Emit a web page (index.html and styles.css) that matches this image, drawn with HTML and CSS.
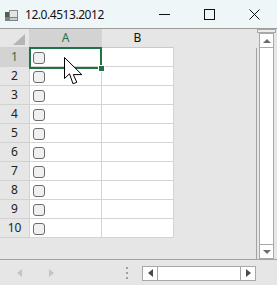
FILE: index.html
```html
<!DOCTYPE html>
<html lang="en">
<head>
    <meta charset="UTF-8">
    <title>12.0.4513.2012</title>
    <link rel="stylesheet" href="styles.css">
</head>
<body>
    <div class="window">
        <div class="titlebar">
            <svg class="app-icon" width="13" height="11" viewBox="0 0 13 11">
                <rect x="0" y="2" width="5" height="5" fill="#4f5d55"/>
                <rect x="4.5" y="0.5" width="8" height="7" fill="#e4e4e4" stroke="#8a8a8a"/>
                <rect x="0" y="7" width="13" height="4" fill="#7c857f"/>
                <rect x="5" y="8" width="7" height="2" fill="#c9cfcb"/>
            </svg>
            <span class="title">12.0.4513.2012</span>
            <div class="caption-btns">
                <span class="cap-btn">
                    <svg width="12" height="12" viewBox="0 0 12 12"><path d="M1 6.5H12" stroke="#111" stroke-width="1"/></svg>
                </span>
                <span class="cap-btn">
                    <svg width="12" height="12" viewBox="0 0 12 12"><rect x="1.5" y="1.5" width="10" height="10" fill="none" stroke="#111" stroke-width="1"/></svg>
                </span>
                <span class="cap-btn">
                    <svg width="12" height="12" viewBox="0 0 12 12"><path d="M1.5 1.5L11.5 11.5M11.5 1.5L1.5 11.5" stroke="#111" stroke-width="1"/></svg>
                </span>
            </div>
        </div>

        <div class="main">
            <div class="sheet">
                <div class="col-heads">
                    <div class="corner">
                        <svg width="12" height="11" viewBox="0 0 12 11"><path d="M12 0V11H0Z" fill="#b5b5b5"/></svg>
                    </div>
                    <div class="col-head active">A</div>
                    <div class="col-head last">B</div>
                </div>
                <div class="sheet-body">
                    <div class="rows">
                        <div class="row-head active">1</div>
                        <div class="cell"><span class="check"></span>
                            <div class="selection"><span class="fill-handle"></span></div>
                        </div>
                        <div class="cell"></div>
                        <div class="row-head">2</div><div class="cell"><span class="check"></span></div><div class="cell"></div>
                        <div class="row-head">3</div><div class="cell"><span class="check"></span></div><div class="cell"></div>
                        <div class="row-head">4</div><div class="cell"><span class="check"></span></div><div class="cell"></div>
                        <div class="row-head">5</div><div class="cell"><span class="check"></span></div><div class="cell"></div>
                        <div class="row-head">6</div><div class="cell"><span class="check"></span></div><div class="cell"></div>
                        <div class="row-head">7</div><div class="cell"><span class="check"></span></div><div class="cell"></div>
                        <div class="row-head">8</div><div class="cell"><span class="check"></span></div><div class="cell"></div>
                        <div class="row-head">9</div><div class="cell"><span class="check"></span></div><div class="cell"></div>
                        <div class="row-head">10</div><div class="cell"><span class="check"></span></div><div class="cell"></div>
                    </div>
                </div>
            </div>
            <div class="vscroll">
                <div class="split-box"></div>
                <div class="vbar">
                    <div class="sbtn up"><span class="tri-up"></span></div>
                    <div class="vtrack"></div>
                    <div class="sbtn down"><span class="tri-down"></span></div>
                </div>
            </div>
        </div>

        <div class="bottom">
            <span class="nav"><span class="tri-left light"></span></span>
            <span class="nav"><span class="tri-right light"></span></span>
            <span class="dots"><i></i><i></i><i></i></span>
            <div class="hbar">
                <div class="hbtn left"><span class="tri-left"></span></div>
                <div class="htrack"></div>
                <div class="hbtn right"><span class="tri-right"></span></div>
            </div>
        </div>

        <!-- mouse pointer over A1 -->
        <svg class="pointer" width="20" height="29" viewBox="0 0 20 29">
            <path d="M0.5 0.5V21.5L5.5 16.8L9 26.8L12.8 25.2L9.3 17.6H17.8Z" fill="#fff" stroke="#000" stroke-width="1" stroke-linejoin="miter"/>
        </svg>
    </div>
</body>
</html>
```

FILE: styles.css
```css
body {
    margin: 0;
    padding: 0;
    background-color: #e6e6e6;
    font-family: "Noto Sans", "Open Sans", Arial, sans-serif;
    color: #111;
}
.window {
    position: relative;
    width: 277px;
    height: 285px;
    display: flex;
    flex-direction: column;
    background-color: #e6e6e6;
    overflow: hidden;
}
.titlebar {
    height: 28px;
    display: flex;
    align-items: center;
    background-color: #eef6f8;
    border-bottom: 1px solid #9c9c9c;
}
.app-icon {
    margin-left: 5px;
    margin-right: 7px;
    margin-top: 2px;
}
.title {
    font-size: 12px;
    letter-spacing: -0.45px;
    color: #111;
}
.caption-btns {
    margin-left: auto;
    display: flex;
}
.cap-btn {
    width: 45px;
    height: 28px;
    display: flex;
    align-items: center;
    justify-content: center;
}
.cap-btn svg {
    margin-left: -1px;
}
.main {
    height: 230px;
    display: flex;
    border-bottom: 1px solid #a3a3a3;
}
.sheet {
    width: 257px;
    display: flex;
    flex-direction: column;
}
.col-heads {
    display: grid;
    grid-template-columns: 30px 72px 72px;
    height: 19px;
}
.corner {
    box-sizing: border-box;
    border-right: 1px solid #d2d2d2;
    border-bottom: 1px solid #d2d2d2;
    display: flex;
    align-items: flex-end;
    justify-content: flex-end;
    padding: 0 4px 2px 0;
}
.col-head {
    box-sizing: border-box;
    border-right: 1px solid #d6d6d6;
    border-bottom: 1px solid #c9c9c9;
    font-size: 12px;
    line-height: 18px;
    text-align: center;
    color: #111;
}
.col-head.last {
    border-right-color: #e6e6e6;
}
.col-head.active {
    background-color: #d3d3d3;
    color: #217346;
}
.sheet-body {
    flex: 1;
    border-right: 1px solid #a3a3a3;
}
.rows {
    display: grid;
    grid-template-columns: 30px 72px 72px;
    grid-auto-rows: 19px;
    width: 174px;
}
.row-head {
    box-sizing: border-box;
    border-right: 1px solid #d2d2d2;
    border-bottom: 1px solid #d2d2d2;
    font-size: 12px;
    line-height: 18px;
    text-align: center;
    color: #222;
}
.row-head.active {
    background-color: #d3d3d3;
    color: #217346;
}
.cell {
    position: relative;
    box-sizing: border-box;
    background-color: #fff;
    border-right: 1px solid #d4d4d4;
    border-bottom: 1px solid #d4d4d4;
}
.check {
    display: block;
    box-sizing: border-box;
    width: 12px;
    height: 12px;
    margin: 4px 0 0 3px;
    border: 1px solid #6b6b6b;
    border-radius: 3px;
    background-color: #f0f0f0;
}
.selection {
    position: absolute;
    z-index: 2;
    left: -1px;
    top: -1px;
    width: 73px;
    height: 22px;
    box-sizing: border-box;
    border: 2px solid #217346;
}
.fill-handle {
    position: absolute;
    right: -4px;
    bottom: -4px;
    width: 5px;
    height: 5px;
    background-color: #217346;
    box-shadow: 0 0 0 1px #fff;
}
.vscroll {
    width: 20px;
    display: flex;
    flex-direction: column;
}
.split-box {
    height: 2px;
    margin-right: 1px;
    border: 1px solid #a8a8a8;
    background-color: #ececec;
}
.vbar {
    flex: 1;
    width: 13px;
    margin-left: 2px;
    display: flex;
    flex-direction: column;
    border: 1px solid #a8a8a8;
    background-color: #fff;
}
.sbtn {
    height: 13px;
    display: flex;
    align-items: center;
    justify-content: center;
}
.sbtn.up {
    border-bottom: 1px solid #a8a8a8;
}
.sbtn.down {
    border-top: 1px solid #a8a8a8;
}
.vtrack,
.htrack {
    flex: 1;
}
.tri-up {
    width: 0;
    height: 0;
    border-left: 4px solid transparent;
    border-right: 4px solid transparent;
    border-bottom: 4px solid #6d6d6d;
}
.tri-down {
    width: 0;
    height: 0;
    border-left: 4px solid transparent;
    border-right: 4px solid transparent;
    border-top: 4px solid #6d6d6d;
}
.tri-left {
    width: 0;
    height: 0;
    border-top: 4.5px solid transparent;
    border-bottom: 4.5px solid transparent;
    border-right: 5px solid #4a4a4a;
}
.tri-right {
    width: 0;
    height: 0;
    border-top: 4.5px solid transparent;
    border-bottom: 4.5px solid transparent;
    border-left: 5px solid #4a4a4a;
}
.tri-left.light {
    border-right-color: #c4c4c4;
}
.tri-right.light {
    border-left-color: #c4c4c4;
}
.bottom {
    flex: 1;
    display: flex;
    align-items: center;
}
.nav {
    width: 32px;
    height: 10px;
    display: flex;
    align-items: center;
    justify-content: center;
}
.nav:first-child {
    margin-left: 3px;
}
.dots {
    display: flex;
    flex-direction: column;
    gap: 3px;
    margin-left: 59px;
    margin-top: 1px;
}
.dots i {
    display: block;
    width: 2px;
    height: 2px;
    background-color: #a0a0a0;
}
.hbar {
    width: 112px;
    height: 13px;
    margin-left: 14px;
    margin-top: 1px;
    display: flex;
    border: 1px solid #a8a8a8;
    background-color: #fff;
}
.hbtn {
    width: 14px;
    display: flex;
    align-items: center;
    justify-content: center;
}
.hbtn.left {
    border-right: 1px solid #a8a8a8;
}
.hbtn.right {
    border-left: 1px solid #a8a8a8;
}
.pointer {
    position: absolute;
    z-index: 3;
    left: 64px;
    top: 57px;
}
```
